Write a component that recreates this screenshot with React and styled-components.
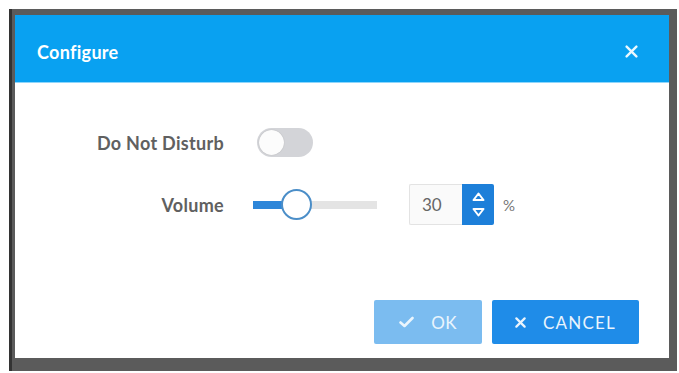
import React, { useState } from "react";
import styled, { createGlobalStyle } from "styled-components";

const GlobalStyle = createGlobalStyle`
  html, body {
    margin: 0;
    padding: 0;
    background: #ffffff;
    font-family: Lato, "Open Sans", sans-serif;
  }
`;

const Page = styled.div`
  width: 679px;
  height: 373px;
  padding: 9px 2px 2px 9px;
  box-sizing: border-box;
`;

const Backdrop = styled.div`
  width: 668px;
  height: 362px;
  box-sizing: border-box;
  padding: 6px 8px 13px 3px;
  background: #5b5b5b;
  border-left: 3px solid #333;
  display: flex;
`;

const Dialog = styled.div`
  flex: 1;
  display: flex;
  flex-direction: column;
  background: #fff;
`;

const Header = styled.div`
  height: 68px;
  flex-shrink: 0;
  box-sizing: border-box;
  display: flex;
  align-items: center;
  justify-content: space-between;
  padding: 6px 31px 0 22px;
  background: #09a1f1;
  border-bottom: 1px solid #8fd6fb;
  color: #fff;
`;

const Title = styled.h2`
  margin: 0;
  font-size: 18px;
  font-weight: 700;
  letter-spacing: 0.3px;
`;

const Close = styled.button`
  border: none;
  background: none;
  padding: 0;
  color: #eaf8ff;
  display: flex;
  cursor: pointer;
`;

const Body = styled.div`
  flex: 1;
  display: flex;
  flex-direction: column;
  padding: 45px 30px 14px 0;
`;

const Form = styled.div`
  display: grid;
  grid-template-columns: 209px auto;
  column-gap: 33px;
  row-gap: 27px;
  align-items: center;
`;

const Label = styled.label`
  justify-self: end;
  font-size: 18px;
  font-weight: 700;
  letter-spacing: 0.3px;
  color: #606060;
`;

const Field = styled.div`
  display: flex;
  align-items: center;
`;

const Toggle = styled.button`
  width: 56px;
  height: 29px;
  border: none;
  padding: 2px;
  border-radius: 15px;
  background: ${(p) => (p.$on ? "#1f8ce8" : "#d3d4d8")};
  display: flex;
  justify-content: ${(p) => (p.$on ? "flex-end" : "flex-start")};
  cursor: pointer;
`;

const Knob = styled.span`
  width: 25px;
  height: 25px;
  border-radius: 50%;
  background: #fcfcfc;
  box-shadow: 0 0 1px rgba(0, 0, 0, 0.25);
`;

const Slider = styled.div`
  position: relative;
  width: 124px;
  height: 31px;
  margin-left: -4px;
  display: flex;
  align-items: center;
`;

const Track = styled.div`
  width: 100%;
  height: 8px;
  background: #e4e4e4;
  position: relative;
`;

const Fill = styled.div`
  height: 100%;
  background: #2d86d9;
`;

const Thumb = styled.div`
  position: absolute;
  top: 0;
  width: 31px;
  height: 31px;
  box-sizing: border-box;
  border-radius: 50%;
  border: 2px solid #4b8ec8;
  background: #fff;
`;

const Spinner = styled.div`
  display: flex;
  margin-left: 32px;
  height: 41px;
`;

const NumberBox = styled.input`
  width: 53px;
  box-sizing: border-box;
  border: 1px solid #e3e3e3;
  border-right: none;
  border-radius: 2px 0 0 2px;
  background: #fafafa;
  padding: 0 0 0 12px;
  font-family: Lato, sans-serif;
  font-size: 17px;
  color: #666;
  outline: none;
`;

const Steps = styled.div`
  width: 32px;
  background: #1d7fd9;
  border-radius: 0 2px 2px 0;
  display: flex;
  flex-direction: column;
  align-items: center;
  justify-content: center;
  gap: 5px;
`;

const Unit = styled.span`
  margin-left: 9px;
  font-size: 15px;
  color: #777;
`;

const Footer = styled.div`
  margin-top: auto;
  display: flex;
  justify-content: flex-end;
  gap: 10px;
`;

const Button = styled.button`
  height: 44px;
  width: ${(p) => p.$w}px;
  border: none;
  border-radius: 2px;
  background: ${(p) => (p.$disabled ? "#7bbcf0" : "#1f8ce8")};
  color: ${(p) => (p.$disabled ? "#eaf5fd" : "#e9f4fd")};
  font-family: Lato, sans-serif;
  font-size: 17px;
  letter-spacing: ${(p) => (p.$disabled ? 0.3 : 1.2)}px;
  display: flex;
  align-items: center;
  justify-content: center;
  gap: 17px;
  cursor: pointer;
`;

const Arrow = ({ down }) => (
  <svg width="13" height="10" viewBox="0 0 13 10">
    <path
      d={down ? "M1.5 2 L11.5 2 L6.5 8.5 Z" : "M1.5 8 L11.5 8 L6.5 1.5 Z"}
      fill="none"
      stroke="#fff"
      strokeWidth="2"
      strokeLinejoin="round"
    />
  </svg>
);

const X = ({ size, stroke }) => (
  <svg width={size} height={size} viewBox="0 0 12 12">
    <path d="M1.5 1.5 L10.5 10.5 M10.5 1.5 L1.5 10.5" stroke="currentColor" strokeWidth={stroke} strokeLinecap="round" />
  </svg>
);

const Check = () => (
  <svg width="15" height="12" viewBox="0 0 15 12">
    <path d="M1.5 6.5 L5.5 10 L13.5 2" fill="none" stroke="currentColor" strokeWidth="2.6" strokeLinecap="round" strokeLinejoin="round" />
  </svg>
);

export default function App() {
  const [dnd, setDnd] = useState(false);
  const volume = 30;
  const pos = (volume / 100) * (124 - 31);

  return (
    <>
      <GlobalStyle />
      <Page>
        <Backdrop>
          <Dialog>
            <Header>
              <Title>Configure</Title>
              <Close aria-label="Close">
                <X size={13} stroke={2.2} />
              </Close>
            </Header>
            <Body>
              <Form>
                <Label>Do Not Disturb</Label>
                <Field>
                  <Toggle $on={dnd} onClick={() => setDnd(!dnd)}>
                    <Knob />
                  </Toggle>
                </Field>
                <Label>Volume</Label>
                <Field>
                  <Slider>
                    <Track>
                      <Fill style={{ width: pos + 15 }} />
                    </Track>
                    <Thumb style={{ left: pos }} />
                  </Slider>
                  <Spinner>
                    <NumberBox defaultValue={volume} />
                    <Steps>
                      <Arrow />
                      <Arrow down />
                    </Steps>
                  </Spinner>
                  <Unit>%</Unit>
                </Field>
              </Form>
              <Footer>
                <Button $disabled $w={108}>
                  <Check />
                  OK
                </Button>
                <Button $w={147}>
                  <X size={11} stroke={2.4} />
                  CANCEL
                </Button>
              </Footer>
            </Body>
          </Dialog>
        </Backdrop>
      </Page>
    </>
  );
}
